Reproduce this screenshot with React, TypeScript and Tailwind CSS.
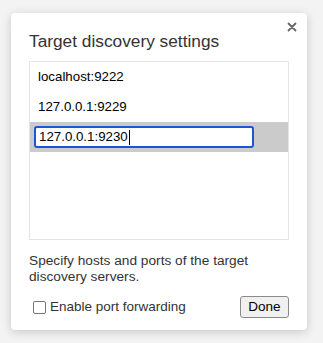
import React from 'react';

const hosts = ['localhost:9222', '127.0.0.1:9229'];

export default function App() {
  return (
    <div className="h-[343px] w-[323px] bg-[#f3f3f3] pl-[11px] pt-[13px] font-['Liberation_Sans',Arial,sans-serif] text-[#222]">
      <div className="relative flex h-[317px] w-[296px] flex-col rounded-[4px] bg-white px-[18px] pt-[18px] shadow-[0_2px_10px_rgba(0,0,0,0.18)]">
        <button className="absolute right-[10px] top-[9px] text-[#666]" aria-label="Close">
          <svg width="10" height="10" viewBox="0 0 10 10">
            <path d="M1.5 1.5l7 7M8.5 1.5l-7 7" stroke="currentColor" strokeWidth="1.8" strokeLinecap="round" />
          </svg>
        </button>
        <h1 className="text-[17.3px] leading-[20px] text-[#333]">Target discovery settings</h1>
        <div className="mt-[10px] h-[179px] w-[260px] border border-[#e4e4e4]">
          {hosts.map((h) => (
            <div key={h} className="flex h-[30px] items-center pl-[8px] text-[13.3px] text-black">
              {h}
            </div>
          ))}
          <div className="flex h-[30px] items-center bg-[#cbcbcb] pl-[4px]">
            <div className="flex h-[22px] w-[220px] items-center rounded-[3px] border-2 border-[#1f55d0] bg-white pl-[3px] text-[13.3px] text-black">
              127.0.0.1:9230
              <span className="ml-px h-[15px] w-px bg-black" />
            </div>
          </div>
        </div>
        <p className="mt-[13px] text-[13.7px] leading-[16px] text-[#333]">
          Specify hosts and ports of the target discovery servers.
        </p>
        <div className="mt-[11px] flex items-center justify-between">
          <label className="flex items-center pl-[4px] text-[13.5px] text-[#333]">
            <span className="mr-[4px] h-[13px] w-[13px] rounded-[2px] border border-[#767676] bg-white" />
            Enable port forwarding
          </label>
          <button className="h-[22px] w-[49px] rounded-[3px] border border-[#8a8a8a] bg-[#f0f0f0] text-[13.5px] text-black">
            Done
          </button>
        </div>
      </div>
    </div>
  );
}
